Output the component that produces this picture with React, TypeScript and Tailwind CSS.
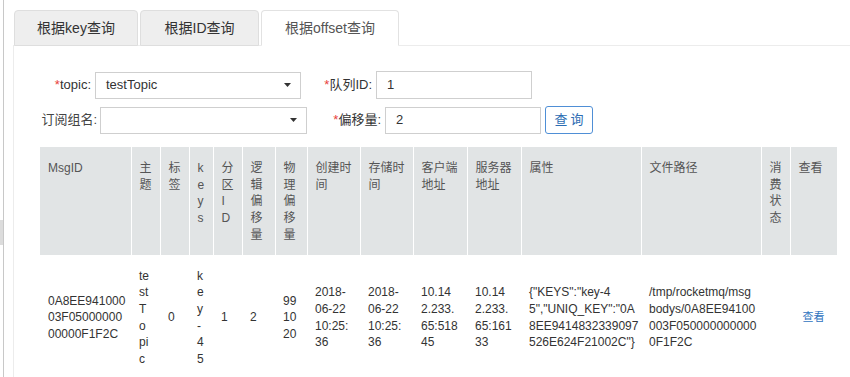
const cols: { w: number; head: string[]; body: string[]; center?: boolean; link?: boolean }[] = [
  { w: 91, head: ["MsgID"], body: ["0A8EE941000", "03F05000000", "00000F1F2C"] },
  { w: 29, head: ["主", "题"], body: ["te", "st", "T", "o", "pi", "c"] },
  { w: 29, head: ["标", "签"], body: ["0"] },
  { w: 24, head: ["k", "e", "y", "s"], body: ["k", "e", "y", "-", "4", "5"] },
  { w: 29, head: ["分", "区", "I", "D"], body: ["1"] },
  { w: 33, head: ["逻", "辑", "偏", "移", "量"], body: ["2"] },
  { w: 32, head: ["物", "理", "偏", "移", "量"], body: ["99", "10", "20"] },
  { w: 53, head: ["创建时", "间"], body: ["2018-", "06-22", "10:25:", "36"] },
  { w: 53, head: ["存储时", "间"], body: ["2018-", "06-22", "10:25:", "36"] },
  { w: 54, head: ["客户端", "地址"], body: ["10.14", "2.233.", "65:518", "45"] },
  { w: 54, head: ["服务器", "地址"], body: ["10.14", "2.233.", "65:161", "33"] },
  {
    w: 120,
    head: ["属性"],
    body: ['{"KEYS":"key-4', '5","UNIQ_KEY":"0A', "8EE9414832339097", '526E624F21002C"}'],
  },
  { w: 120, head: ["文件路径"], body: ["/tmp/rocketmq/msg", "bodys/0A8EE94100", "003F050000000000", "0F1F2C"] },
  { w: 29, head: ["消", "费", "状", "态"], body: [] },
  { w: 47, head: ["查看"], body: ["查看"], center: true, link: true },
];

function Caret() {
  return (
    <svg width="7" height="4" viewBox="0 0 7 4" className="absolute right-[9px] top-1/2 -translate-y-1/2">
      <path d="M0 0h7L3.5 4z" fill="#333" />
    </svg>
  );
}

function Req({ text }: { text: string }) {
  return (
    <>
      <span className="text-[#e8413a]">*</span>
      {text}
    </>
  );
}

export default function App() {
  const tabs = [
    { label: "根据key查询", w: "w-[124px]" },
    { label: "根据ID查询", w: "w-[119px]" },
    { label: "根据offset查询", w: "w-[138px]", active: true },
  ];

  return (
    <div className="min-h-screen bg-white flex font-['Liberation_Sans','Noto_Sans_CJK_SC',sans-serif] text-[#333]">
      <div className="w-[3px] shrink-0">
        <div className="mt-[220px] h-[25px] bg-[#dcdcdc]" />
      </div>
      <div className="w-px shrink-0 bg-[#c8c8c8]" />

      <div className="flex-1 pl-[9px] pt-[10px]">
        <div className="flex items-end border-b border-[#ececec] pl-px">
          {tabs.map((t) => (
            <div
              key={t.label}
              className={`${t.w} h-[36px] -mb-px mr-[2px] rounded-t-[4px] border flex items-center justify-center text-[14px] ${
                t.active
                  ? "bg-white border-[#e2e2e2] border-b-white text-[#555]"
                  : "bg-[#eeeeee] border-[#dedede] text-[#333]"
              }`}
            >
              {t.label}
            </div>
          ))}
        </div>

        <div className="border-l border-[#ececec] pt-[25px] pb-4">
          <div className="flex items-center h-[28px] text-[13px]">
            <div className="w-[77px] text-right">
              <Req text="topic:" />
            </div>
            <div className="relative ml-[4px] w-[206px] h-[27px] border border-[#cfcfcf] flex items-center pl-[10px]">
              testTopic
              <Caret />
            </div>
            <div className="w-[71px] text-right">
              <Req text="队列ID:" />
            </div>
            <div className="ml-[4px] w-[156px] h-[28px] border border-[#cfcfcf] flex items-center pl-[10px]">1</div>
          </div>

          <div className="flex items-center h-[28px] mt-[7px] text-[13px]">
            <div className="w-[83px] text-right text-[#444]">订阅组名:</div>
            <div className="relative ml-[3px] w-[207px] h-[27px] border border-[#cfcfcf]">
              <Caret />
            </div>
            <div className="w-[74px] text-right">
              <Req text="偏移量:" />
            </div>
            <div className="ml-[4px] w-[156px] h-[27px] border border-[#cfcfcf] flex items-center pl-[10px]">2</div>
            <button className="ml-[4px] w-[48px] h-[28px] rounded-[3px] border border-[#4f8fd6] bg-white text-[#2d6db3] text-[13px] tracking-[3px] pl-[3px]">
              查询
            </button>
          </div>

          <table className="ml-[26px] mt-[13px] table-fixed border-collapse text-[12px] leading-[16.7px]">
            <colgroup>
              {cols.map((c, i) => (
                <col key={i} style={{ width: c.w }} />
              ))}
            </colgroup>
            <thead>
              <tr className="bg-[#e1e4e5]">
                {cols.map((c, i) => (
                  <th
                    key={i}
                    className="align-top text-left font-normal text-[#555] pl-[8px] pr-0 pt-[13px] pb-[11px] border-r border-white last:border-r-0"
                  >
                    {c.head.map((l, j) => (
                      <div key={j} className="whitespace-nowrap">
                        {l}
                      </div>
                    ))}
                  </th>
                ))}
              </tr>
            </thead>
            <tbody>
              <tr>
                {cols.map((c, i) => (
                  <td
                    key={i}
                    className={`align-middle py-[13px] text-[#333] ${c.center ? "text-center" : "pl-[8px] text-left"}`}
                  >
                    {c.body.map((l, j) =>
                      c.link ? (
                        <a key={j} className="text-[11px] text-[#2f73c0] cursor-pointer">
                          {l}
                        </a>
                      ) : (
                        <div key={j} className="whitespace-nowrap">
                          {l}
                        </div>
                      )
                    )}
                  </td>
                ))}
              </tr>
            </tbody>
          </table>
        </div>
      </div>
    </div>
  );
}
